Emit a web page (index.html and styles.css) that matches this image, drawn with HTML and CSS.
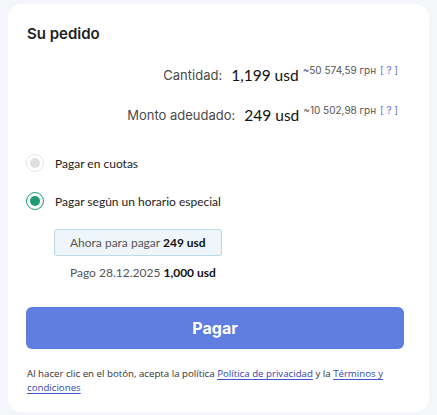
FILE: index.html
```html
<!DOCTYPE html>
<html lang="es">
<head>
<meta charset="utf-8">
<link rel="stylesheet" href="styles.css">
</head>
<body>
<div class="card">
  <h2 class="title">Su pedido</h2>
  <div class="sum-row">
    <span class="label">Cantidad:</span>
    <span class="amount">1,199 usd</span>
    <span class="conv">~50 574,59 грн <a class="help">[ ? ]</a></span>
  </div>
  <div class="sum-row second">
    <span class="label">Monto adeudado:</span>
    <span class="amount">249 usd</span>
    <span class="conv">~10 502,98 грн <a class="help">[ ? ]</a></span>
  </div>

  <div class="options">
    <label class="option disabled">
      <span class="radio"></span>
      <span class="opt-text">Pagar en cuotas</span>
    </label>
    <label class="option checked">
      <span class="radio"></span>
      <span class="opt-text">Pagar según un horario especial</span>
    </label>
  </div>

  <div class="schedule">
    <div class="now-box">Ahora para pagar <b>249 usd</b></div>
    <div class="later">Pago 28.12.2025 <b>1,000 usd</b></div>
  </div>

  <button class="pay">Pagar</button>

  <p class="terms">Al hacer clic en el botón, acepta la política <a>Política de privacidad</a> y la <a>Términos y</a><br><a>condiciones</a></p>
</div>
</body>
</html>
```

FILE: styles.css
```css
html, body {
  margin: 0;
  padding: 0;
  background: #f4f6f9;
}
body {
  padding: 4px 8px 3px;
  font-family: Inter, "Liberation Sans", sans-serif;
}
.card {
  background: #fff;
  border-radius: 14px;
  padding: 20px 25px 18px 18px;
  height: 408px;
  box-sizing: border-box;
}
.title {
  margin: 0 0 0 1px;
  font-size: 15px;
  line-height: 20px;
  font-weight: 600;
  color: #222;
}
.sum-row {
  display: flex;
  justify-content: flex-end;
  align-items: flex-start;
  margin: 21px 6px 0 0;
  height: 20px;
}
.sum-row.second {
  margin-top: 20px;
}
.label {
  font-size: 13px;
  line-height: 20px;
  color: #4a4a4a;
  margin-right: 9px;
}
.amount {
  font-family: Lato, sans-serif;
  font-size: 15.5px;
  line-height: 20px;
  color: #111;
  margin-right: 4px;
}
.conv {
  font-size: 10px;
  line-height: 12px;
  color: #555;
  margin-top: -1px;
}
.help {
  color: #6470f2;
  margin-left: 1px;
}
.options {
  margin-top: 29px;
  display: flex;
  flex-direction: column;
  gap: 20px;
}
.option {
  display: flex;
  align-items: center;
  gap: 11px;
  font-family: Lato, sans-serif;
  font-size: 12px;
  color: #222;
  height: 18px;
}
.radio {
  width: 18px;
  height: 18px;
  box-sizing: border-box;
  border-radius: 50%;
  position: relative;
  flex: none;
}
.radio::after {
  content: "";
  position: absolute;
  left: 2.5px;
  top: 2.5px;
  width: 10px;
  height: 10px;
  border-radius: 50%;
}
.disabled .radio {
  border: 1.5px solid #e6e6e6;
}
.disabled .radio::after {
  background: #dedede;
}
.checked .radio {
  border: 1.5px solid #1f9d6e;
}
.checked .radio::after {
  background: #1f9d6e;
}
.schedule {
  margin: 19px 0 0 28px;
  font-family: Lato, sans-serif;
  font-size: 12px;
  color: #555;
}
.schedule b {
  color: #111;
  font-weight: 700;
}
.now-box {
  display: inline-block;
  box-sizing: border-box;
  height: 27px;
  line-height: 25px;
  padding: 0 15px;
  border: 1px solid #bcd9ec;
  border-radius: 3px;
  background: #eef6fb;
}
.later {
  margin: 8px 0 0 16px;
  line-height: 18px;
}
.pay {
  display: block;
  width: 100%;
  height: 42px;
  margin-top: 25px;
  border: 0;
  border-radius: 6px;
  background: #607de0;
  color: #fff;
  font-family: Inter, sans-serif;
  font-size: 16px;
  font-weight: 700;
}
.terms {
  margin: 18px 0 0 1px;
  font-family: "Open Sans", sans-serif;
  font-size: 9.7px;
  line-height: 13.5px;
  color: #333;
}
.terms a {
  color: #3446b0;
  text-decoration: underline;
  text-decoration-color: #3f55d6;
  text-underline-offset: 2px;
}
```
